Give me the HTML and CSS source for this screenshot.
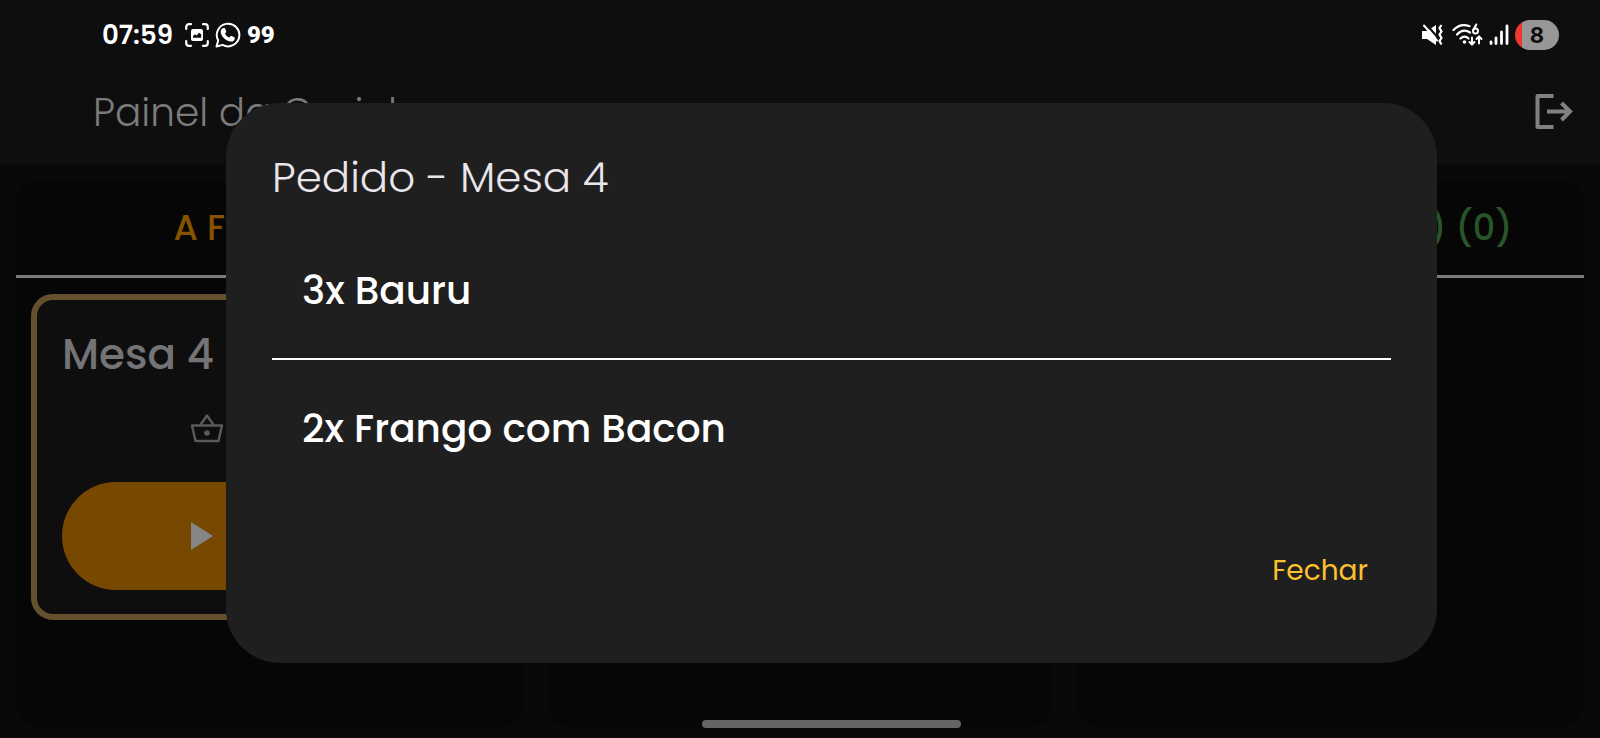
FILE: index.html
```
<!DOCTYPE html>
<html lang="pt-BR">
<head>
<meta charset="utf-8">
<meta name="viewport" content="width=device-width, initial-scale=1">
<title>Painel da Cozinha</title>
<link rel="stylesheet" href="styles.css">
</head>
<body>

<div class="top">
	<div class="status">
		<div class="status-left">
			<span class="clock">07:59</span>
			<svg width="24" height="24" viewBox="0 0 24 24" fill="none" stroke="#fff" stroke-width="2.2" stroke-linecap="round">
				<path d="M1.2 6V4a2.8 2.8 0 0 1 2.8-2.8h2M18 1.2h2A2.8 2.8 0 0 1 22.8 4v2M22.8 18v2a2.8 2.8 0 0 1-2.8 2.8h-2M6 22.8H4A2.8 2.8 0 0 1 1.2 20v-2"/>
				<path fill="#fff" stroke="none" fill-rule="evenodd" d="M8 6h8a2 2 0 0 1 2 2v8a2 2 0 0 1-2 2H8a2 2 0 0 1-2-2V8a2 2 0 0 1 2-2zm0 8.800h8.200v-3.600l-2.200-1.400-2.400 2.600-1.600-1.200L8 13z"/>
			</svg>
			<svg width="26" height="26" viewBox="0 0 26 26">
				<path fill="none" stroke="#fff" stroke-width="2" stroke-linejoin="round" d="M1.500 24.500l1.700-6A11.300 11.300 0 1 1 7.600 22.900z"/>
				<path fill="#fff" d="M9 6c.8 0 1 .2 1.200.8l1 2.700c.1.400 0 .8-.3 1.100l-.9 1.100c1 2 2.300 3 4.300 3.900l1.200-1.400c.3-.3.700-.4 1.100-.2l2.700 1.300c.5.200.6.600.5 1.100-.2 2.200-2.100 3.300-3.900 3.100-5-.3-10-5.400-10.200-9.500C5.600 7.900 6.900 6 9 6z"/>
			</svg>
			<span class="badge99">99</span>
		</div>
		<div class="status-right">
			<svg width="24" height="22" viewBox="0 0 24 22">
				<path fill="#fff" d="M0 7h5l9-6v20l-9-6H0z"/>
				<path fill="none" stroke="#0e0e0e" stroke-width="2" d="M4 0l14 16"/>
				<path fill="none" stroke="#fff" stroke-width="2" stroke-linecap="round" d="M2 1.500l13 15"/>
				<path fill="none" stroke="#fff" stroke-width="2.200" d="M19.500 1l-2 3 2 3.500-2 3 2 3.500-2 3 2 3.500"/>
			</svg>
			<svg width="31" height="24" viewBox="0 0 31 24" fill="none" stroke="#fff" stroke-width="2.200" stroke-linecap="round">
				<path d="M1.500 7C6 2.200 12 1 17.500 3.200M5 11.500c4-4 9-4.600 13-2M8.500 15.500c2.600-2.500 5.600-2.500 8 0"/>
				<circle cx="12.500" cy="19" r="1.800" fill="#fff" stroke="none"/>
				<circle cx="23.500" cy="8" r="2.500" stroke-width="2"/>
				<path stroke-width="2" d="M21.300 7L24.300 1.500M20 14.500v7M17.500 19l2.500 2.500 2.500-2.500M27 20.500v-7M24.500 16l2.500-2.500 2.500 2.500"/>
			</svg>
			<svg width="20" height="22" viewBox="0 0 20 22" fill="none" stroke="#fff" stroke-width="2.800" stroke-linecap="round">
				<path d="M2 18v1.500M7 14v5.500M12.500 8v11.500M18 2v17.500"/>
			</svg>
			<span class="battery">8</span>
		</div>
	</div>
	<header class="appbar">
		<h1>Painel da Cozinha</h1>
		<button class="logout" aria-label="Sair">
			<svg width="40" height="38" viewBox="0 0 40 38" fill="none" stroke="#818181" stroke-width="4">
				<path stroke-linejoin="round" d="M19.500 3h-16v31h16"/>
				<path d="M13 18.500h22M27.500 10l8.500 8.500-8.500 8.500"/>
			</svg>
		</button>
	</header>
</div>

<main class="board">
	<section class="column">
		<h2 class="todo">A FAZER (1)</h2>
		<div class="card">
			<h3>Mesa 4</h3>
			<p class="items">
				<svg width="34" height="32" viewBox="0 0 34 32" fill="none" stroke="#5a5a5a" stroke-width="2.400" stroke-linejoin="round">
					<path d="M2 12.500h30l-3.500 15.500H5.500zM10 12.500l7-10 7 10"/>
					<circle cx="17" cy="20" r="2.800" fill="#5a5a5a" stroke="none"/>
				</svg>
				2 itens
			</p>
			<button class="start">
				<svg width="22" height="28" viewBox="0 0 22 28" fill="#858585"><path d="M0 0l22 14L0 28z"/></svg>
				Iniciar
			</button>
		</div>
	</section>
	<section class="column">
		<h2 class="doing">FAZENDO (0)</h2>
	</section>
	<section class="column">
		<h2 class="done">PRONTOS (HOJE) (0)</h2>
	</section>
</main>

<div class="overlay">
	<div class="dialog" role="dialog" aria-labelledby="pedido">
		<h2 id="pedido">Pedido - Mesa 4</h2>
		<ul>
			<li>3x Bauru</li>
			<li>2x Frango com Bacon</li>
		</ul>
		<button class="close">Fechar</button>
	</div>
</div>

<div class="nav">
	<div class="homebar"></div>
</div>

</body>
</html>
```
FILE: styles.css
```
* {
box-sizing: border-box;
}

body {
margin: 0;
min-height: 100vh;
display: flex;
flex-direction: column;
position: relative;
overflow: hidden;
background: #090909;
color: #fff;
font-family: Poppins, Inter, "Open Sans", sans-serif;
}

h1, h2, h3, p, ul {
margin: 0;
padding: 0;
font-weight: 400;
}

button {
font-family: inherit;
border: none;
background: none;
padding: 0;
cursor: pointer;
}

svg {
display: block;
flex: none;
}

/* phone status bar + app bar */
.top {
background: #0e0e0e;
height: 164px;
}

.status {
display: flex;
justify-content: space-between;
align-items: center;
height: 70px;
padding: 0 41px 0 102px;
}

.status-left, .status-right {
display: flex;
align-items: center;
gap: 6px;
}

.clock {
font-size: 26px;
font-weight: 600;
margin-right: 6px;
}

.badge99 {
font-family: Roboto, sans-serif;
font-size: 24px;
font-weight: 900;
}

.battery {
width: 44px;
height: 30px;
border-radius: 15px;
background: linear-gradient(to right, #f0382f 7px, #979797 7px);
color: #0e0e0e;
font-family: Inter, sans-serif;
font-size: 22px;
font-weight: 700;
line-height: 30px;
text-align: center;
}

.appbar {
display: flex;
justify-content: space-between;
align-items: center;
height: 84px;
padding: 0 26px 0 93px;
}

.appbar h1 {
font-size: 39px;
font-weight: 300;
color: #7b7b7b;
}

/* board */
.board {
flex: 1;
display: grid;
grid-template-columns: repeat(3, 1fr);
gap: 24px;
padding: 16px 16px 11px;
}

.column {
background: #060606;
border-radius: 24px;
}

.column h2 {
height: 98px;
padding-top: 3px;
border-bottom: 3px solid #7a7a7a;
line-height: 90px;
font-size: 35px;
font-weight: 500;
text-align: center;
white-space: nowrap;
}

.column .todo {
color: #875200;
}

.column .doing {
color: #154a75;
}

.column .done {
color: #28552a;
}

.card {
margin: 16px 15px;
padding: 24px 25px;
border: 6px solid #65502d;
border-radius: 22px;
background: #0e0e0e;
}

.card h3 {
font-size: 42px;
line-height: 62px;
font-weight: 500;
color: #747477;
}

.items {
display: flex;
justify-content: center;
align-items: center;
gap: 18px;
height: 50px;
margin: 18px 0 28px;
font-size: 33px;
color: #5a5a5a;
}

.start {
display: flex;
justify-content: center;
align-items: center;
gap: 28px;
width: 100%;
height: 108px;
border-radius: 54px;
background: #774900;
color: #858585;
font-size: 35px;
}

/* order dialog */
.overlay {
position: absolute;
top: 0;
right: 0;
bottom: 0;
left: 0;
display: flex;
align-items: center;
padding: 28px 163px 0 226px;
}

.dialog {
width: 100%;
padding: 41px 46px 45px;
border-radius: 54px;
background: #1f1f1f;
}

.dialog h2 {
font-size: 42px;
line-height: 68px;
font-weight: 300;
color: #e8e6ea;
}

.dialog ul {
list-style: none;
margin-top: 10px;
}

.dialog li {
padding: 2px 30px 0;
font-size: 39px;
font-weight: 500;
line-height: 134px;
}

.dialog li + li {
border-top: 2px solid #fff;
}

.close {
display: block;
margin: 28px 0 0 auto;
padding: 0 23px;
height: 94px;
font-size: 28px;
color: #fdc02f;
}

/* gesture bar, centred beside the camera cutout */
.nav {
position: absolute;
left: 62px;
right: 0;
bottom: 10px;
}

.homebar {
width: 259px;
height: 8px;
margin: 0 auto;
border-radius: 4px;
background: #646464;
}
```
